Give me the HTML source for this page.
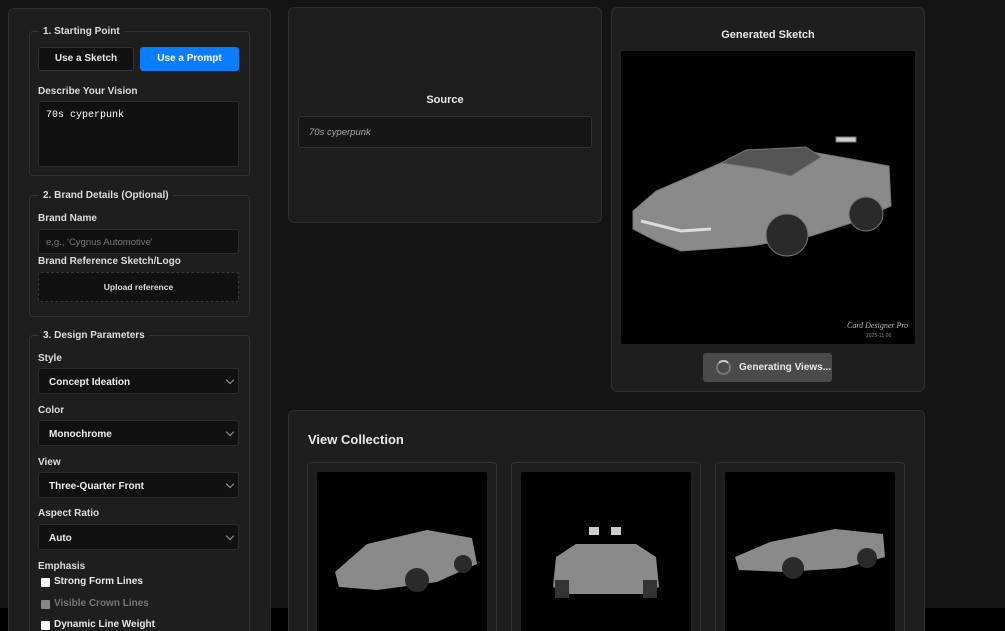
<!DOCTYPE html>
<html><head><meta charset="utf-8"><style>
*{box-sizing:border-box;margin:0;padding:0}
html,body{width:1005px;height:631px;overflow:hidden;background:#000;font-family:"Liberation Sans",sans-serif;color:#e8e8e8}
#w{position:relative;width:1005px;height:631px;overflow:hidden}
.bg{position:absolute;left:0;top:0;width:1005px;height:608px;background:#141414}
.panel{position:absolute;background:#1e1e1e;border:1px solid #2e2e2e;border-radius:6px}
fieldset{position:absolute;border:1px solid #333;border-radius:4px;left:29px;width:221px}
legend{font-size:10px;font-weight:bold;margin-left:9px;padding:0 4px;color:#ddd}
.lbl{position:absolute;left:30px;font-size:10px;font-weight:bold;color:#ddd}
.inp{position:absolute;left:38px;width:201px;background:#111;border:1px solid #2c2c2c;border-radius:3px;font-size:10px}
.sel{height:26px;padding:8px 10px;font-weight:bold;color:#eee}
.sel:after{content:"";position:absolute;right:5px;top:8px;width:5px;height:5px;border-right:1px solid #999;border-bottom:1px solid #999;transform:rotate(45deg)}
.cb{position:absolute;left:41px;width:9px;height:9px;background:#fff;border-radius:1px}
.cbl{position:absolute;left:54px;font-size:10px;font-weight:bold;line-height:10px}
.card{position:absolute;top:462px;width:190px;height:169px;background:#1e1e1e;border:1px solid #333;border-bottom:none;border-radius:4px 4px 0 0;overflow:hidden}
.img{position:absolute;left:9px;top:9px;width:170px;height:160px;background:#000;border-radius:2px;overflow:hidden}
</style></head><body><div id="w">
<div class="bg"></div>
<div class="panel" style="left:8px;top:8px;width:263px;height:623px;border-bottom:none;border-radius:6px 6px 0 0"></div>
<fieldset style="top:26px;height:150px"><legend>1. Starting Point</legend></fieldset>
<div style="position:absolute;left:38px;top:47px;width:96px;height:24px;background:#111;border:1px solid #333;border-radius:3px;font-size:10px;font-weight:bold;text-align:center;line-height:22px">Use a Sketch</div>
<div style="position:absolute;left:140px;top:47px;width:99px;height:24px;background:#0a7dff;border-radius:3px;font-size:10px;font-weight:bold;text-align:center;line-height:24px;color:#fff">Use a Prompt</div>
<div class="lbl" style="left:38px;top:86px">Describe Your Vision</div>
<div class="inp" style="top:101px;height:66px;padding:8px 7px;font-family:'Liberation Mono',monospace;color:#fff;font-size:10px">70s cyperpunk</div>
<fieldset style="top:190px;height:127px"><legend>2. Brand Details (Optional)</legend></fieldset>
<div class="lbl" style="left:38px;top:213px">Brand Name</div>
<div class="inp" style="top:229px;height:25px;padding:7px 7px;color:#777;font-size:9.5px">e.g., 'Cygnus Automotive'</div>
<div class="lbl" style="left:38px;top:256px">Brand Reference Sketch/Logo</div>
<div class="inp" style="top:272px;height:30px;border:1px dashed #3a3a3a;text-align:center;line-height:28px;font-size:8.5px;font-weight:bold;color:#ddd">Upload reference</div>
<fieldset style="top:330px;height:301px;border-bottom:none;border-radius:4px 4px 0 0"><legend>3. Design Parameters</legend></fieldset>
<div class="lbl" style="left:38px;top:353px">Style</div>
<div class="inp sel" style="top:368px">Concept Ideation</div>
<div class="lbl" style="left:38px;top:405px">Color</div>
<div class="inp sel" style="top:420px">Monochrome</div>
<div class="lbl" style="left:38px;top:457px">View</div>
<div class="inp sel" style="top:472px">Three-Quarter Front</div>
<div class="lbl" style="left:38px;top:508px">Aspect Ratio</div>
<div class="inp sel" style="top:524px">Auto</div>
<div class="lbl" style="left:38px;top:561px">Emphasis</div>
<div class="cb" style="top:578px"></div><div class="cbl" style="top:577px">Strong Form Lines</div>
<div class="cb" style="top:600px;background:#888"></div><div class="cbl" style="top:599px;color:#777">Visible Crown Lines</div>
<div class="cb" style="top:621px"></div><div class="cbl" style="top:620px">Dynamic Line Weight</div>

<div class="panel" style="left:288px;top:7px;width:314px;height:216px"></div>
<div style="position:absolute;left:288px;width:314px;top:94px;text-align:center;font-size:11px;font-weight:bold">Source</div>
<div style="position:absolute;left:298px;top:116px;width:294px;height:32px;background:#161616;border:1px solid #333;border-radius:3px;padding:10px;font-size:9.5px;font-style:italic;color:#aaa">70s cyperpunk</div>

<div class="panel" style="left:611px;top:7px;width:314px;height:385px"></div>
<div style="position:absolute;left:611px;width:314px;top:29px;text-align:center;font-size:11px;font-weight:bold">Generated Sketch</div>
<div style="position:absolute;left:621px;top:51px;width:294px;height:293px;background:#000;border-radius:2px">
<svg width="294" height="293" viewBox="0 0 294 293"><g stroke="#777" stroke-width="1">
<path d="M12 160 L35 140 L100 112 L140 102 L185 100 L230 108 L268 115 L270 155 L230 172 L190 185 L130 195 L60 200 L35 190 L12 178 Z" fill="#8a8a8a"/>
<path d="M100 112 L125 99 L185 96 L200 106 L170 125 L140 118 Z" fill="#555"/>
<path d="M20 170 L60 180 L90 178" fill="none" stroke="#ddd" stroke-width="3"/>
<circle cx="166" cy="184" r="21" fill="#2a2a2a"/><circle cx="245" cy="163" r="17" fill="#2a2a2a"/>
<rect x="215" y="86" width="20" height="5" fill="#ccc"/>
</g><text x="226" y="277" fill="#bbb" font-size="8" font-style="italic" font-family="Liberation Serif">Card Designer Pro</text><text x="245" y="286" fill="#888" font-size="5">2025-11-06</text></svg></div>
<div style="position:absolute;left:703px;top:353px;width:129px;height:29px;background:#4a4a4a;border-radius:3px;font-size:10px;font-weight:bold;line-height:29px;padding-left:36px">Generating Views...</div>
<div style="position:absolute;left:716px;top:360px;width:15px;height:15px;border:2px solid #777;border-top-color:#ccc;border-radius:50%"></div>

<div class="panel" style="left:288px;top:410px;width:637px;height:221px;border-bottom:none;border-radius:6px 6px 0 0"></div>
<div style="position:absolute;left:308px;top:432px;font-size:13px;font-weight:bold">View Collection</div>
<div class="card" style="left:307px"><div class="img"><svg width="170" height="160"><path d="M18 100 L50 72 L110 58 L155 66 L160 92 L120 110 L60 118 L22 115Z" fill="#8a8a8a"/><circle cx="100" cy="108" r="12" fill="#2a2a2a"/><circle cx="146" cy="92" r="9" fill="#2a2a2a"/></svg></div></div>
<div class="card" style="left:511px"><div class="img"><svg width="170" height="160"><path d="M35 85 L55 72 L115 72 L135 85 L138 115 L125 122 L45 122 L32 115Z" fill="#8a8a8a"/><rect x="34" y="108" width="14" height="18" fill="#333"/><rect x="122" y="108" width="14" height="18" fill="#333"/><rect x="68" y="55" width="10" height="8" fill="#ccc"/><rect x="90" y="55" width="10" height="8" fill="#ccc"/></svg></div></div>
<div class="card" style="left:715px"><div class="img"><svg width="170" height="160"><path d="M10 85 L45 70 L110 57 L158 62 L160 85 L120 96 L60 100 L14 98Z" fill="#8a8a8a"/><circle cx="68" cy="96" r="11" fill="#2a2a2a"/><circle cx="142" cy="86" r="10" fill="#2a2a2a"/></svg></div></div>
</div></body></html>
